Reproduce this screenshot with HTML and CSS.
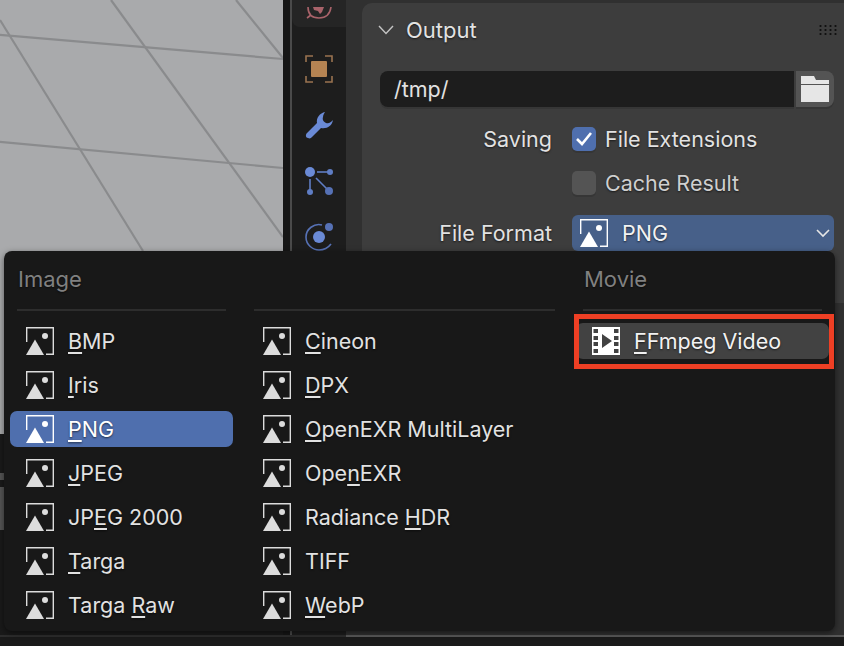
FILE: index.html
```html
<!DOCTYPE html>
<html lang="en">
<head>
  <meta charset="UTF-8" />
  <title>Output Properties</title>
  <link rel="stylesheet" href="styles.css">
</head>
<body>
  <svg width="0" height="0" class="defs">
    <symbol id="img" viewBox="0 0 28 28">
      <path d="M0.7 15V0.7H27.3V27.3H20" fill="none" stroke="currentColor" stroke-width="1.4"/>
      <circle cx="19" cy="9" r="3" fill="currentColor"/>
      <path d="M9 12.5L18 28H0Z" fill="currentColor"/>
    </symbol>
  </svg>

  <div class="app">
    <div class="main">
      <div class="left">
        <div class="viewport">
          <svg class="grid" width="283" height="434" viewBox="0 0 283 434">
            <g stroke="#8a8b8d" stroke-width="2.2" fill="none">
              <path d="M-10 34L283 59"/>
              <path d="M-10 141L283 168"/>
              <path d="M0 20L143 251"/>
              <path d="M111 0L283 237"/>
              <path d="M236 0L283 58"/>
            </g>
          </svg>
        </div>
        <div class="timeline"></div>
      </div>
      <div class="divider"></div>
      <div class="tabs">
        <div class="tab-top">
          <svg width="28" height="14" viewBox="0 0 28 14"><path d="M3 0C3 8 8 11 14 11C20 11 25 8 26 0" fill="none" stroke="#a9636a" stroke-width="1.6"/><path d="M8 0H19L17 5L15 7L13 4L9 3Z" fill="#a9636a"/><path d="M2 11L6 8" stroke="#a9636a" stroke-width="1.6"/></svg>
        </div>
        <svg class="tab-icon" width="28" height="28" viewBox="0 0 28 28">
          <path d="M1 7V1H8M20 1H27V7M1 21V27H8M20 27H27V21" fill="none" stroke="#9a7350" stroke-width="1.6"/>
          <rect x="6" y="6" width="16" height="16" rx="1" fill="#b58453"/>
        </svg>
        <svg class="tab-icon" width="28" height="28" viewBox="0 0 28 28">
          <path d="M20 1C15 2 11 7 12 12L2 22C0 24 1 27 3 27C5 28 6 27 7 26L16 17C22 18 27 15 28 9C26 11 24 13 21 12C19 11 17 9 18 6C18 4 19 3 20 1Z" fill="#6a8ad6"/>
        </svg>
        <svg class="tab-icon" width="28" height="28" viewBox="0 0 28 28">
          <g stroke="#5f7dc4" stroke-width="1.6"><path d="M12 5H24"/><path d="M5 12V24"/><path d="M11 11L23 23"/></g>
          <circle cx="5" cy="5" r="5" fill="#6a8ad6"/><circle cx="25" cy="5" r="3" fill="#5f7dc4"/><circle cx="5" cy="25" r="3" fill="#5f7dc4"/><circle cx="24" cy="24" r="4" fill="#5671b5"/>
        </svg>
        <svg class="tab-icon" width="28" height="28" viewBox="0 0 28 28">
          <path d="M17 2C9 0 1 6 1 14C1 22 8 27 14 27C19 27 23 25 26 21" fill="none" stroke="#5671b5" stroke-width="1.6"/>
          <circle cx="14" cy="14" r="6" fill="#6a8ad6"/><circle cx="24" cy="4" r="4" fill="#5671b5"/>
        </svg>
      </div>
      <div class="props">
        <section class="panel">
          <header class="panel-head">
            <svg class="chev" width="16" height="10" viewBox="0 0 16 10"><path d="M1 1L8 8.5L15 1" fill="none" stroke="#c4c4c4" stroke-width="1.4"/></svg>
            <span class="panel-title">Output</span>
            <span class="grip"></span>
          </header>
          <div class="path-row">
            <div class="path-field">/tmp/</div>
            <div class="path-btn">
              <svg width="28" height="26" viewBox="0 0 28 26"><path d="M0 0H13L15 4H28V8H0Z" fill="#e6e6e6"/><rect y="9" width="28" height="17" fill="#e6e6e6"/></svg>
            </div>
          </div>
          <div class="form-row">
            <span class="form-label">Saving</span>
            <span class="check on"><svg width="18" height="16" viewBox="0 0 18 16"><path d="M2 8L7 13L16 2" fill="none" stroke="#fff" stroke-width="2.6"/></svg></span>
            <span class="check-text">File Extensions</span>
          </div>
          <div class="form-row">
            <span class="form-label"></span>
            <span class="check"></span>
            <span class="check-text dim">Cache Result</span>
          </div>
          <div class="form-row format-row">
            <span class="form-label">File Format</span>
            <div class="select">
              <svg class="ic"><use href="#img"/></svg>
              <span class="select-text">PNG</span>
              <svg class="select-chev" width="14" height="9" viewBox="0 0 14 9"><path d="M1 1L7 7L13 1" fill="none" stroke="#e6e6e6" stroke-width="1.6"/></svg>
            </div>
          </div>
        </section>
      </div>
    </div>
    <div class="foot">
      <div class="foot-left"></div>
      <div class="foot-right"></div>
    </div>
  </div>

  <div class="menu">
    <div class="col col-a">
      <div class="col-title">Image</div>
      <div class="item"><svg class="ic"><use href="#img"/></svg><span><u>B</u>MP</span></div>
      <div class="item"><svg class="ic"><use href="#img"/></svg><span><u>I</u>ris</span></div>
      <div class="item active"><svg class="ic"><use href="#img"/></svg><span><u>P</u>NG</span></div>
      <div class="item"><svg class="ic"><use href="#img"/></svg><span><u>J</u>PEG</span></div>
      <div class="item"><svg class="ic"><use href="#img"/></svg><span>JP<u>E</u>G 2000</span></div>
      <div class="item"><svg class="ic"><use href="#img"/></svg><span><u>T</u>arga</span></div>
      <div class="item"><svg class="ic"><use href="#img"/></svg><span>Targa <u>R</u>aw</span></div>
    </div>
    <div class="col col-b">
      <div class="col-title">&nbsp;</div>
      <div class="item"><svg class="ic"><use href="#img"/></svg><span><u>C</u>ineon</span></div>
      <div class="item"><svg class="ic"><use href="#img"/></svg><span><u>D</u>PX</span></div>
      <div class="item"><svg class="ic"><use href="#img"/></svg><span><u>O</u>penEXR MultiLayer</span></div>
      <div class="item"><svg class="ic"><use href="#img"/></svg><span>Ope<u>n</u>EXR</span></div>
      <div class="item"><svg class="ic"><use href="#img"/></svg><span>Radiance <u>H</u>DR</span></div>
      <div class="item"><svg class="ic"><use href="#img"/></svg><span>TIFF</span></div>
      <div class="item"><svg class="ic"><use href="#img"/></svg><span><u>W</u>ebP</span></div>
    </div>
    <div class="col col-c">
      <div class="col-title">Movie</div>
      <div class="item hover">
        <svg class="ic" viewBox="0 0 28 28">
          <path fill="#fff" fill-rule="evenodd" d="M0 0H28V28H0ZM1.5 2V6H6V2ZM1.5 9V13H6V9ZM1.5 15V19H6V15ZM1.5 22V26H6V22ZM22 2V6H26.5V2ZM22 9V13H26.5V9ZM22 15V19H26.5V15ZM22 22V26H26.5V22ZM10 7V21L20 14Z"/>
        </svg>
        <span><u>F</u>Fmpeg Video</span>
      </div>
    </div>
  </div>
  <div class="highlight"></div>
</body>
</html>
```

FILE: styles.css
```css
* {
  box-sizing: border-box;
}

html, body {
  margin: 0;
  height: 646px;
  overflow: hidden;
}

body {
  position: relative;
  width: 844px;
  background: #1a1a1a;
  font-family: Inter, "Noto Sans", sans-serif;
  font-size: 21.5px;
  color: #e2e2e2;
}

.defs {
  position: absolute;
}

.app {
  display: flex;
  flex-direction: column;
  height: 646px;
}

.main {
  display: flex;
  height: 635px;
}

.left {
  width: 283px;
  display: flex;
  flex-direction: column;
}

.viewport {
  height: 434px;
  background: #a9aaac;
}

.grid {
  display: block;
}

.timeline {
  flex: 1;
  background: linear-gradient(#1a1a1a 0 39px, #555 39px 46px, #1a1a1a 46px 53px, #555 53px 96px, #1a1a1a 96px);
}

.divider {
  width: 9px;
  background: #161616;
  border-right: 2px solid #4a4a4a;
}

.tabs {
  width: 54px;
  background: #1d1d1d;
  display: flex;
  flex-direction: column;
  align-items: center;
  gap: 28px;
}

.tab-top {
  height: 27px;
  width: 100%;
  text-align: center;
  background: #252525;
  border-radius: 0 0 0 8px;
}

.tab-icon {
  display: block;
}

.props {
  flex: 1;
  background: #303030;
  padding: 3px 0 0 16px;
}

.panel {
  background: #3d3d3d;
  border-radius: 10px 0 0 0;
  height: 300px;
  padding: 0 0 0 18px;
}

.panel-head {
  display: flex;
  align-items: center;
  height: 54px;
  margin-left: -2px;
}

.chev {
  margin-right: 12px;
}

.panel-title {
  flex: 1;
  font-size: 22px;
  text-shadow: 0 1px 2px rgba(0, 0, 0, 0.6);
}

.grip {
  width: 20px;
  height: 12px;
  margin-right: 6px;
  background: radial-gradient(circle, #111 0 1px, transparent 1.2px) 0 0 / 5px 4px;
}

.path-row {
  display: flex;
  margin: 14px 0 0;
  width: 454px;
  height: 36px;
}

.path-field {
  flex: 1;
  background: #1d1d1d;
  border-radius: 8px 0 0 8px;
  box-shadow: 0 2px 0 #363636;
  padding-left: 14px;
  line-height: 36px;
  margin-right: 2px;
}

.path-btn {
  width: 38px;
  background: #545454;
  border-radius: 0 8px 8px 0;
  box-shadow: 0 2px 0 #363636;
  display: flex;
  align-items: center;
  justify-content: center;
}

.path-btn svg {
  width: 28px;
  height: 26px;
}

.form-row {
  display: flex;
  align-items: center;
  height: 36px;
  margin-top: 8px;
  text-shadow: 0 1px 2px rgba(0, 0, 0, 0.6);
}

.path-row + .form-row,
.format-row {
  margin-top: 14px;
}

.form-label {
  width: 192px;
  padding-right: 20px;
  text-align: right;
}

.check {
  width: 24px;
  height: 24px;
  border-radius: 5px;
  background: #545454;
  box-shadow: 0 2px 0 #363636;
  display: flex;
  align-items: center;
  justify-content: center;
  margin-right: 9px;
}

.check.on {
  background: #4f6fae;
}

.check-text.dim {
  color: #cfcfcf;
}

.select {
  width: 262px;
  height: 36px;
  background: #476089;
  border-radius: 6px;
  display: flex;
  align-items: center;
  padding-left: 8px;
  color: #f2f2f2;
}

.select-text {
  flex: 1;
  margin-left: 14px;
}

.select-chev {
  margin-right: 4px;
}

.foot {
  display: flex;
  height: 11px;
}

.foot-left {
  width: 346px;
  border-top: 2px solid #2d2d2d;
}

.foot-right {
  flex: 1;
  border-top: 2px solid #585858;
}

.ic {
  width: 28px;
  height: 28px;
  flex: none;
  color: #dcdcdc;
}

.select .ic {
  color: #fff;
}

.menu {
  position: absolute;
  left: 4px;
  top: 251px;
  width: 831px;
  height: 380px;
  background: #181818;
  border-radius: 8px;
  box-shadow: 0 2px 6px rgba(0, 0, 0, 0.5);
  display: flex;
  gap: 14px;
  padding: 10px 6px 0;
}

.col {
  display: flex;
  flex-direction: column;
  gap: 8px;
}

.col-a {
  width: 223px;
}

.col-b {
  width: 315px;
}

.col-c {
  width: 253px;
}

.col-title {
  height: 50px;
  margin: 0 7px 4px 7px;
  padding-left: 1px;
  line-height: 36px;
  font-size: 22px;
  color: #808080;
  border-bottom: 2px solid #2d2d2d;
  text-shadow: 0 1px 2px rgba(0, 0, 0, 0.6);
}

.item {
  display: flex;
  align-items: center;
  height: 36px;
  padding-left: 16px;
  gap: 14px;
  border-radius: 7px;
  text-shadow: 0 1px 2px rgba(0, 0, 0, 0.6);
}

.item u {
  text-underline-offset: 3px;
  text-decoration-thickness: 1.5px;
  text-decoration-skip-ink: none;
}

.item.active {
  background: #4f6fae;
  color: #fff;
}

.item.active .ic {
  color: #fff;
}

.item.hover {
  background: #424242;
  color: #f2f2f2;
}

.highlight {
  position: absolute;
  left: 574px;
  top: 314px;
  width: 260px;
  height: 55px;
  border: 5px solid #ee3f24;
}
```
